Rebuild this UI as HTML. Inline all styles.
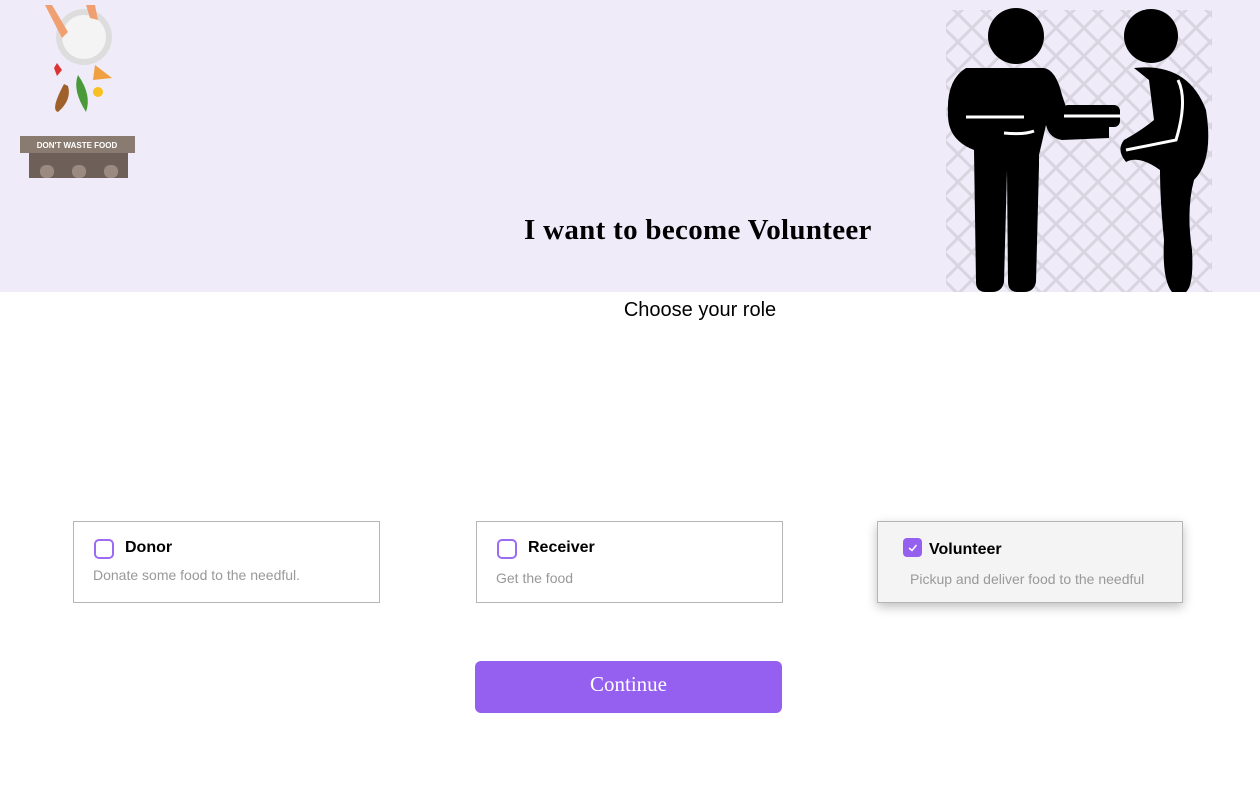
<!DOCTYPE html>
<html><head><meta charset="utf-8"><style>
*{margin:0;padding:0;box-sizing:border-box}
body{width:1260px;height:800px;background:#fff;font-family:"Liberation Sans",sans-serif;position:relative;overflow:hidden}
.hdr{position:absolute;left:0;top:0;width:1260px;height:292px;background:#efebf9}
h1{position:absolute;left:524px;top:214px;font-family:"Liberation Serif",serif;font-weight:bold;font-size:29px;color:#000;letter-spacing:0.3px;white-space:nowrap}
.sub{position:absolute;left:0;width:1400px;top:299px;text-align:center;font-size:20px;color:#000}
.card{position:absolute;top:521px;width:307px;height:82px;border:1px solid #b5b5b5;background:#fff}
.card .cb{position:absolute;left:20px;top:17px;width:20px;height:20px;border:2px solid #9b6cf2;border-radius:5px}
.card .t{position:absolute;left:51px;top:17px;font-weight:bold;font-size:16px;color:#000}
.card .d{position:absolute;left:19px;top:45px;font-size:14px;color:#999}
.sel{background:#f4f4f4;box-shadow:0 4px 10px rgba(0,0,0,.25)}
.btn{position:absolute;left:475px;top:661px;width:307px;height:52px;background:#9560ef;border-radius:6px;color:#fff;font-family:"Liberation Serif",serif;font-size:21px;text-align:center;line-height:46px}
</style></head><body>
<div class="hdr">
<svg width="150" height="190" style="position:absolute;left:0;top:0">
<circle cx="84" cy="37" r="28" fill="#ddd"/><circle cx="84" cy="37" r="22" fill="#f4f4f4"/>
<path d="M45 5 L52 5 L68 32 L62 38 Z" fill="#f0a070"/><path d="M86 5 L95 5 L98 20 L90 18 Z" fill="#f0a070"/>
<path d="M57 63 L62 70 L57 76 L54 68Z" fill="#d33"/>
<path d="M95 65 L112 78 L93 80Z" fill="#f0a040"/>
<path d="M78 75 Q72 90 86 112 Q92 95 78 75Z" fill="#4a9a3a"/>
<path d="M64 84 Q50 110 58 112 Q72 100 68 86Z" fill="#a0602a"/>
<circle cx="98" cy="92" r="5" fill="#f8c020"/>
<rect x="20" y="136" width="115" height="17" fill="#8a7b70"/>
<text x="77" y="148" font-size="8" font-weight="bold" fill="#fff" text-anchor="middle" font-family="Liberation Sans">DON'T WASTE FOOD</text>
<rect x="29" y="153" width="99" height="25" fill="#6e6058"/>
<rect x="40" y="165" width="14" height="13" rx="6" fill="#9a8a80"/><rect x="72" y="165" width="14" height="13" rx="6" fill="#9a8a80"/><rect x="104" y="165" width="14" height="13" rx="6" fill="#9a8a80"/>
</svg>
<svg width="270" height="292" viewBox="0 0 270 292" style="position:absolute;left:944px;top:0">
<defs><pattern id="p" width="28" height="28" patternUnits="userSpaceOnUse"><path d="M0 0L28 28M28 0L0 28" stroke="#d8d4e0" stroke-width="3"/></pattern></defs>
<rect x="2" y="10" width="266" height="282" fill="url(#p)"/>
<g fill="#000">
<circle cx="72" cy="36" r="28"/>
<path d="M22 68 L100 68 Q112 70 118 95 L128 125 L165 127 L165 138 L118 140 Q105 138 102 125 L95 155 L95 165 L92 282 Q90 292 80 292 L74 292 Q64 292 64 282 L63 170 L60 282 Q58 292 48 292 L42 292 Q32 292 32 282 L30 150 Q4 140 4 115 Q2 80 22 68Z"/>
<rect x="118" y="105" width="58" height="22" rx="6"/>
<circle cx="207" cy="36" r="27"/>
<path d="M190 68 Q244 62 262 110 Q270 160 250 180 Q242 210 248 250 Q250 285 242 292 L228 292 Q218 280 220 240 Q216 200 216 170 Q195 155 182 162 Q172 150 180 140 Q198 130 210 120 L205 80Z"/>
</g>
<path d="M22 117 L80 117 M120 116 L176 116" stroke="#fff" stroke-width="3"/>
<path d="M234 80 Q244 100 232 140 L182 150" stroke="#fff" stroke-width="3" fill="none"/>
<path d="M90 131 Q80 135 60 133" stroke="#fff" stroke-width="3" fill="none"/>
</svg>
<h1>I want to become Volunteer</h1>
</div>
<div class="sub">Choose your role</div>
<div class="card" style="left:73px"><div class="cb"></div><div class="t">Donor</div><div class="d">Donate some food to the needful.</div></div>
<div class="card" style="left:476px"><div class="cb"></div><div class="t">Receiver</div><div class="d" style="top:48px">Get the food</div></div>
<div class="card sel" style="left:877px;width:306px"><div class="cb" style="left:25px;top:16px;width:19px;height:19px;background:#9560ef;border-color:#9560ef;border-radius:4px"><svg width="15" height="15" style="position:absolute;left:0;top:0"><path d="M4 8 L7 10.5 L11.5 5" stroke="#fff" stroke-width="1.5" fill="none"/></svg></div><div class="t" style="top:19px">Volunteer</div><div class="d" style="left:32px;top:49px">Pickup and deliver food to the needful</div></div>
<div class="btn">Continue</div>
</body></html>
